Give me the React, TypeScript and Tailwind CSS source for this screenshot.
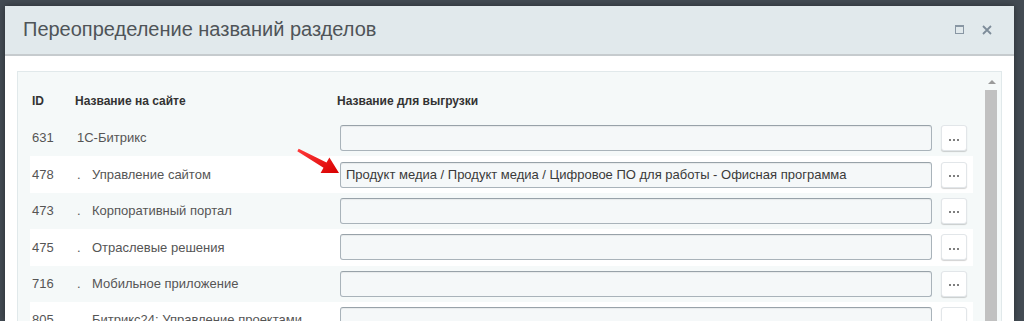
import React from "react";

const rows = [
  { id: "631", name: "1С-Битрикс", child: false, value: "" },
  { id: "478", name: "Управление сайтом", child: true, value: "Продукт медиа / Продукт медиа / Цифровое ПО для работы - Офисная программа" },
  { id: "473", name: "Корпоративный портал", child: true, value: "" },
  { id: "475", name: "Отраслевые решения", child: true, value: "" },
  { id: "716", name: "Мобильное приложение", child: true, value: "" },
  { id: "805", name: "Битрикс24: Управление проектами", child: true, value: "" },
];

function Row({ r, i }: { r: (typeof rows)[number]; i: number }) {
  return (
    <div className={`flex items-center h-[36.4px] shrink-0 ${i % 2 === 1 ? "bg-white" : "bg-transparent"}`}>
      <div className="w-[45px] pl-[2px] text-[13px] text-[#555]">{r.id}</div>
      <div className="w-[265px] pl-[2px] text-[13px] text-[#555] flex whitespace-nowrap">
        {r.child && <span className="w-[15px]">.</span>}
        <span>{r.name}</span>
      </div>
      <div className="w-[592px] h-[26px] rounded-[3px] border border-[#a9b3ba] border-t-[#98a2a9] bg-[#f5f8f9] shadow-[inset_0_1px_1px_rgba(0,0,0,0.06)] flex items-center pl-[5px] text-[13px] text-[#3a3a3a] whitespace-nowrap overflow-hidden">
        {r.value}
      </div>
      <div className="ml-[9px] w-[26px] h-[26px] rounded-[3px] bg-white border border-[#e2e6e9] shadow-[0_1px_1px_rgba(0,0,0,0.18)] flex items-center justify-center gap-[2px] pt-[3px]">
        <span className="w-[2px] h-[2px] bg-[#555] rounded-full" />
        <span className="w-[2px] h-[2px] bg-[#555] rounded-full" />
        <span className="w-[2px] h-[2px] bg-[#555] rounded-full" />
      </div>
    </div>
  );
}

export default function App() {
  return (
    <div
      className="w-[1024px] h-[321px] overflow-hidden bg-[#434b53] pl-[5px] pt-[6px] flex"
      style={{ fontFamily: '"Liberation Sans", Arial, sans-serif' }}
    >
      <div className="w-[1009px] bg-white rounded-t-[2px] flex flex-col shadow-[0_0_6px_rgba(0,0,0,0.4)]">
        <div className="h-[50px] shrink-0 bg-[#e1e9ec] border-b-2 border-[#c6cbce] flex items-center pl-[18px] pr-[22px]">
          <div className="text-[20px] text-[#4f5458] flex-1 pb-[2px]">Переопределение названий разделов</div>
          <div className="flex items-center gap-[18px] pb-[1px]">
            <div className="w-[9px] h-[9px] border border-[#8896a3] border-t-2" />
            <svg width="10" height="10" viewBox="0 0 10 10">
              <path d="M1 1L9 9M9 1L1 9" stroke="#7d8c99" strokeWidth="1.8" />
            </svg>
          </div>
        </div>
        <div className="flex-1 pl-[12px] pr-[12px] pt-[15px] overflow-hidden">
          <div className="relative h-[300px] border border-[#e1e9eb] bg-[#f5f9f9] flex">
            <div className="flex-1 pl-[12px] pr-[12px] flex flex-col">
              <div className="h-[48px] shrink-0 flex items-center pt-[10px] text-[12px] font-bold text-[#333]">
                <div className="w-[45px] pl-[2px]">ID</div>
                <div className="w-[262px]">Название на сайте</div>
                <div>Название для выгрузки</div>
              </div>
              {rows.map((r, i) => (
                <Row key={r.id} r={r} i={i} />
              ))}
            </div>
            <div className="w-[16px] shrink-0 flex flex-col items-start pt-[6px]">
              <svg width="12" height="8" viewBox="0 0 12 8" className="ml-[1px]">
                <path d="M2 6L6 2L10 6Z" fill="#9a9a9a" />
              </svg>
              <div className="mt-[4px] w-[12px] flex-1 bg-[#c1c1c1]" />
            </div>
            <svg
              className="absolute left-[279px] top-[75px]"
              width="44"
              height="30"
              viewBox="0 0 44 30"
            >
              <defs>
                <linearGradient id="ar" x1="0" y1="0" x2="1" y2="1">
                  <stop offset="0" stopColor="#ff3b3b" />
                  <stop offset="1" stopColor="#d80000" />
                </linearGradient>
              </defs>
              <path d="M1.7 1.7 L29.5 15.6 L32.4 10.4 L42 26 L23.6 26 L26.5 20.8 L0.3 4.3 Z" fill="url(#ar)" />
            </svg>
          </div>
        </div>
      </div>
    </div>
  );
}
